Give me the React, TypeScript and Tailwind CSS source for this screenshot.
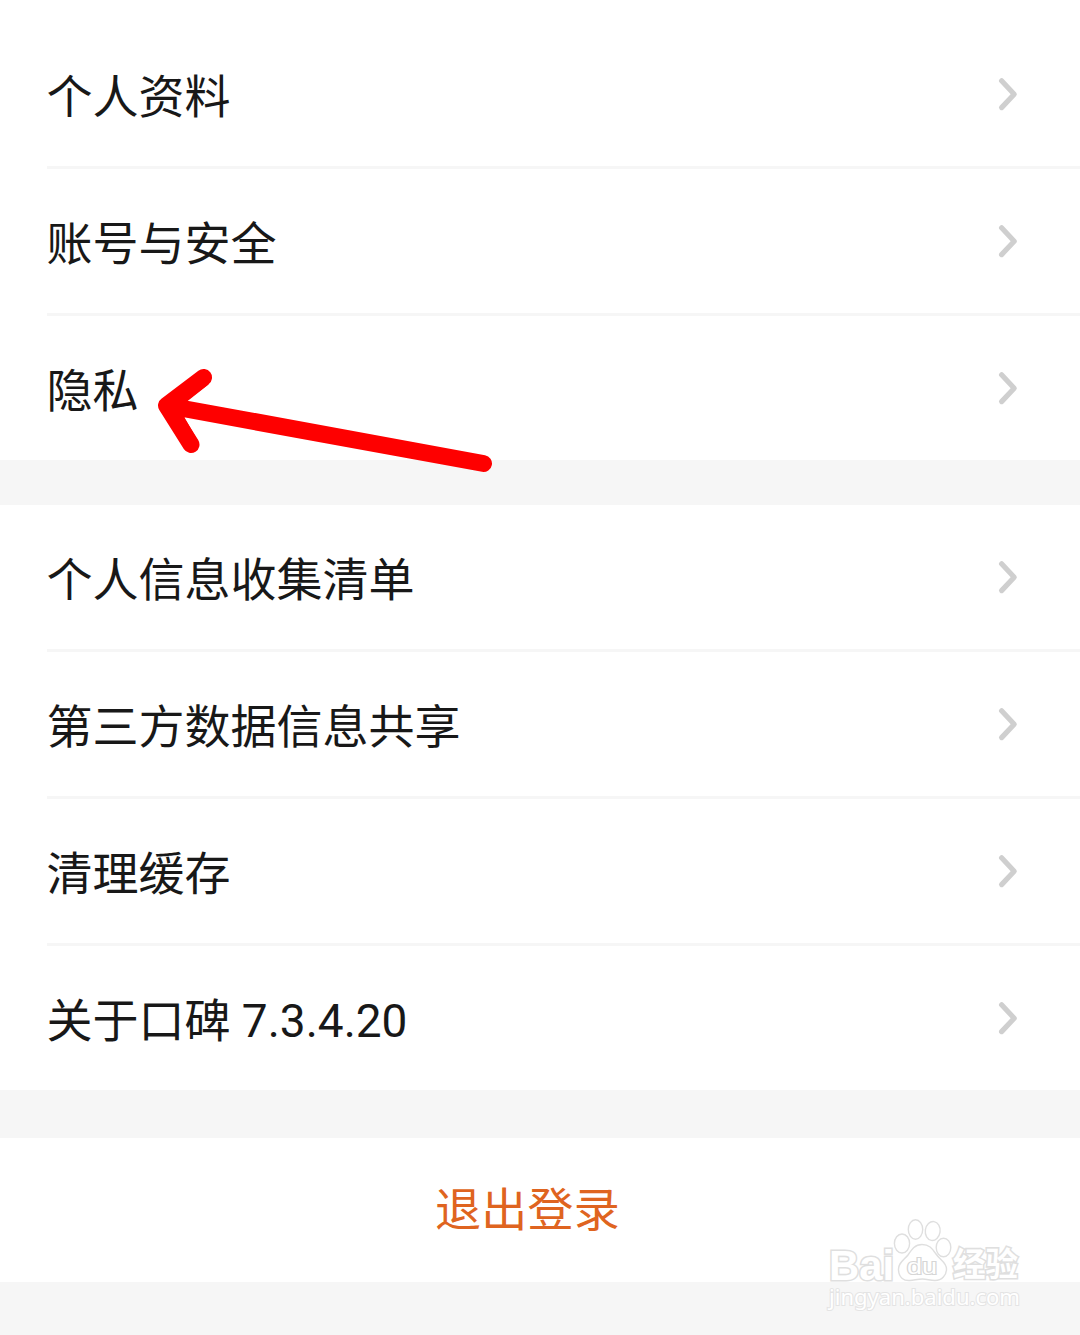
import React from 'react';

const ACCOUNT_ITEMS = ['个人资料', '账号与安全', '隐私'];
const GENERAL_ITEMS = ['个人信息收集清单', '第三方数据信息共享', '清理缓存', '关于口碑 7.3.4.20'];

function Chevron() {
  return (
    <svg className="mr-[60px] h-9 w-6 shrink-0" viewBox="0 0 24 36" fill="none">
      <path d="M5.6 4.8 L18.2 18.2 L5.6 31.6" stroke="#cfcfcf" strokeWidth="5.2" strokeLinecap="round" strokeLinejoin="round" />
    </svg>
  );
}

function SettingsGroup({ items }: { items: string[] }) {
  return (
    <ul className="bg-white pl-[47px]">
      {items.map((item) => (
        <li
          key={item}
          className="box-content flex h-36 items-center justify-between border-b-3 border-[#f6f6f6] last:border-b-0"
        >
          <span className="-ml-[0.6px] whitespace-nowrap pt-1.5 text-[46px] leading-[60px]">{item}</span>
          <Chevron />
        </li>
      ))}
    </ul>
  );
}

// Hand-drawn pointer next to the privacy row
function PointerArrow() {
  return (
    <svg className="absolute left-[150px] top-[360px] h-[120px] w-[350px]" viewBox="150 360 350 120" fill="none">
      <path
        d="M203.5 377.5 L166.5 405.5 L191 444.5 M166.5 405.5 L483.5 463.5"
        stroke="#fe0000"
        strokeWidth="17"
        strokeLinecap="round"
        strokeLinejoin="round"
      />
      <path d="M166 405 L204 378 L208.5 384.5 L187 401.5 L192 410 L184.5 417.5 L198 441 L191 444 Z" fill="#fe0000" />
    </svg>
  );
}

function Watermark() {
  return (
    <svg
      className="absolute left-[820px] top-[1210px] h-[110px] w-[210px]"
      viewBox="820 1210 210 110"
      fill="#ffffff"
      stroke="#dfdfdf"
      strokeWidth="1.4"
    >
      <g className="font-['Liberation_Sans','Noto_Sans_CJK_SC',sans-serif] font-bold" paintOrder="stroke" strokeWidth="3.2">
        <text x="829" y="1279.5" fontSize="43" textLength="65" lengthAdjust="spacingAndGlyphs">Bai</text>
        <text x="953" y="1276" fontSize="33" textLength="65" lengthAdjust="spacingAndGlyphs">经验</text>
      </g>
      {/* paw: four toes and the pad */}
      <ellipse cx="902" cy="1243.5" rx="7.6" ry="9.5" />
      <ellipse cx="915.5" cy="1229.5" rx="7.2" ry="9.7" />
      <ellipse cx="932.7" cy="1231" rx="7.4" ry="9.5" transform="rotate(8 932.7 1231)" />
      <ellipse cx="943.5" cy="1247.5" rx="7.3" ry="9.3" />
      <path d="M922 1244.5 C915 1244.5 912 1249 908 1255 C904 1260 898 1263 898.5 1270 C899 1278 904 1281 910 1280.5 C915 1280 918 1279 922.5 1279 C927 1279 930 1280.5 935 1280.5 C942 1280.5 946.5 1275 946.5 1269 C946.5 1262 940 1260 936 1254 C932 1248 929 1244.5 922 1244.5 Z" />
      <text
        x="907"
        y="1274"
        fontSize="22"
        textLength="30"
        lengthAdjust="spacingAndGlyphs"
        className="font-['Liberation_Sans',sans-serif]"
        paintOrder="stroke"
        stroke="#d6d6d6"
        strokeWidth="2.2"
      >
        du
      </text>
      <text
        x="829"
        y="1305"
        fontSize="21.5"
        textLength="191"
        lengthAdjust="spacingAndGlyphs"
        paintOrder="stroke"
        stroke="#e4e4e4"
        strokeWidth="2"
        className="font-['Noto_Sans',sans-serif]"
      >
        jingyan.baidu.com
      </text>
    </svg>
  );
}

export default function App() {
  return (
    <main className="relative h-[1335px] w-[1080px] overflow-hidden bg-[#f6f6f6] font-['Roboto','Noto_Sans_CJK_SC',sans-serif] text-[#181818]">
      <div className="bg-white pt-[22px]">
        <SettingsGroup items={ACCOUNT_ITEMS} />
      </div>
      <div className="mt-[45px]">
        <SettingsGroup items={GENERAL_ITEMS} />
      </div>
      <button type="button" className="mt-12 flex h-36 w-full items-center justify-center bg-white pr-[25px] text-[46px] leading-[60px] tracking-[0.3px] text-[#df6420]">
        退出登录
      </button>
      <PointerArrow />
      <Watermark />
    </main>
  );
}
